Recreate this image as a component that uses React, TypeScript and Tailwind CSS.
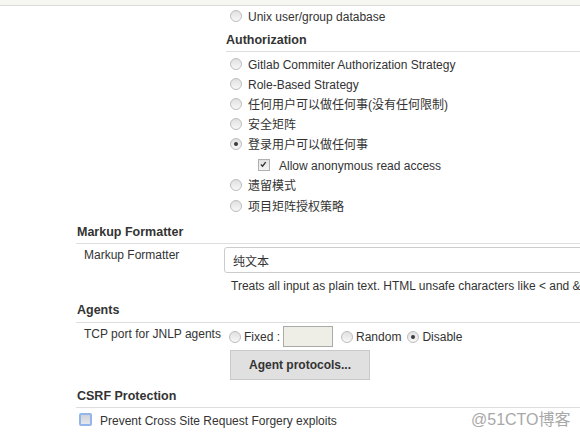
import React from "react";

const font = { fontFamily: '"Liberation Sans", Arial, "Noto Sans CJK SC", sans-serif' };

function Radio({ checked }: { checked?: boolean }) {
  return (
    <span className="relative inline-block w-[12px] h-[12px] rounded-full border border-[#bdbdbd] bg-gradient-to-b from-[#e0e0e0] to-[#f8f8f8] shrink-0">
      {checked && <span className="absolute left-[3px] top-[3px] w-[4px] h-[4px] rounded-full bg-[#3a3a3a]" />}
    </span>
  );
}

function RadioRow({ label, checked, extra = "" }: { label: string; checked?: boolean; extra?: string }) {
  return (
    <div className={"h-[20px] flex items-start " + extra}>
      <span className="ml-[4px] mt-[4px] flex"><Radio checked={checked} /></span>
      <span className="ml-[6px] pt-[3px] whitespace-nowrap">{label}</span>
    </div>
  );
}

function Header({ title, className }: { title: string; className: string }) {
  return (
    <div className={"font-bold text-[12.5px] border-b border-[#dedede] " + className}>{title}</div>
  );
}

export default function App() {
  return (
    <div style={font} className="relative w-[580px] h-[440px] overflow-hidden bg-white text-[#333] text-[12px] leading-[16px]">
      <div className="h-[6px] bg-[#f5f7f0] border-b border-[#dcdcdc]" />
      <div className="pl-[226px]">
        <RadioRow label="Unix user/group database" />
        <Header title="Authorization" className="pt-[6px] pb-[3px]" />
        <div className="mt-[2px]">
          <RadioRow label="Gitlab Commiter Authorization Strategy" />
          <RadioRow label="Role-Based Strategy" />
          <RadioRow label="任何用户可以做任何事(没有任何限制)" />
          <RadioRow label="安全矩阵" />
          <RadioRow label="登录用户可以做任何事" checked />
          <div className="mt-[1px] h-[20px] flex items-start">
            <span className="ml-[32px] mt-[4px] relative w-[12px] h-[12px] border border-[#b0b0b0] bg-gradient-to-b from-[#e2e2e2] to-[#f4f4f4] shrink-0">
              <svg viewBox="0 0 12 12" className="absolute left-0 top-0 w-[10px] h-[10px]">
                <path d="M2.3 5.4 L4.3 7.5 L8 2.6" fill="none" stroke="#333" strokeWidth="1.6" />
              </svg>
            </span>
            <span className="ml-[9px] pt-[3px] whitespace-nowrap">Allow anonymous read access</span>
          </div>
          <RadioRow label="遗留模式" />
          <RadioRow label="项目矩阵授权策略" extra="mt-[1px]" />
        </div>
      </div>

      <div className="pl-[76px]">
        <Header title="Markup Formatter" className="pt-[8px] pb-[3px] pl-[1px]" />
        <div className="flex">
          <div className="w-[148px] shrink-0 pl-[8px] pt-[3px] whitespace-nowrap">Markup Formatter</div>
          <div className="flex flex-col">
            <div className="mt-[3px] h-[26px] w-[400px] border border-[#cccccc] rounded-[3px] bg-white pl-[8px] pt-[6px] whitespace-nowrap">纯文本</div>
            <div className="mt-[5px] ml-[7px] whitespace-nowrap">Treats all input as plain text. HTML unsafe characters like &lt; and &amp;</div>
          </div>
        </div>

        <Header title="Agents" className="pt-[8px] pb-[4px] pl-[1px]" />
        <div className="flex">
          <div className="w-[148px] shrink-0 pl-[8px] pt-[3px] whitespace-nowrap">TCP port for JNLP agents</div>
          <div className="flex flex-col">
            <div className="mt-[3px] flex items-center">
              <span className="ml-[5px] flex"><Radio /></span>
              <span className="ml-[3px] pt-[1px] whitespace-nowrap">Fixed :</span>
              <span className="ml-[3px] w-[50px] h-[21px] border border-[#a9a9a9] bg-[#eeede6]" />
              <span className="ml-[8px] flex"><Radio /></span>
              <span className="ml-[3px] pt-[1px]">Random</span>
              <span className="ml-[6px] flex"><Radio checked /></span>
              <span className="ml-[3px] pt-[1px]">Disable</span>
            </div>
            <div className="mt-[3px] ml-[6px] w-[140px] h-[30px] bg-[#e0e0e0] border border-[#c9c9c9] flex items-center justify-center font-bold">Agent protocols...</div>
          </div>
        </div>

        <Header title="CSRF Protection" className="pt-[8px] pb-[3px] pl-[1px]" />
        <div className="flex items-start">
          <span className="mt-[5px] ml-[3px] w-[13px] h-[13px] rounded-[2px] border-2 border-[#92b5ea] bg-gradient-to-b from-[#cfd3da] to-[#e4e7ec] shrink-0" />
          <span className="ml-[8px] mt-[5px] whitespace-nowrap">Prevent Cross Site Request Forgery exploits</span>
        </div>
      </div>

      <div className="absolute left-[471px] top-[410px] text-[16px] leading-[20px] text-[#a8a8a8] whitespace-nowrap">@51CTO博客</div>
    </div>
  );
}
